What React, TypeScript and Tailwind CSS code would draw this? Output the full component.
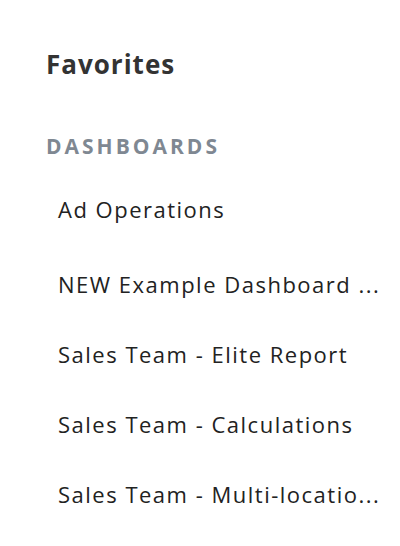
import React from "react";

const items = [
  "Ad Operations",
  "NEW Example Dashboard ...",
  "Sales Team - Elite Report",
  "Sales Team - Calculations",
  "Sales Team - Multi-locatio...",
];

export default function App() {
  return (
    <div
      className="w-[400px] h-[546px] bg-white overflow-hidden"
      style={{ fontFamily: "'Open Sans', 'Noto Sans', sans-serif" }}
    >
      <div className="pl-[46px] pt-[47px]">
        <h1 className="text-[26px] leading-[34px] font-bold text-[#333333] tracking-[1px]">Favorites</h1>
        <h2 className="mt-[52px] text-[21px] leading-[26px] font-bold text-[#7f8892] tracking-[3px]">
          DASHBOARDS
        </h2>
        <ul className="mt-[36px] pl-[12px] flex flex-col">
          {items.map((t, i) => (
            <li
              key={t}
              className={`text-[22px] leading-[28px] text-[#222222] tracking-[1.5px] whitespace-nowrap ${i === 1 ? "mt-[47px]" : i > 1 ? "mt-[42px]" : ""}`}
            >
              {t}
            </li>
          ))}
        </ul>
      </div>
    </div>
  );
}
